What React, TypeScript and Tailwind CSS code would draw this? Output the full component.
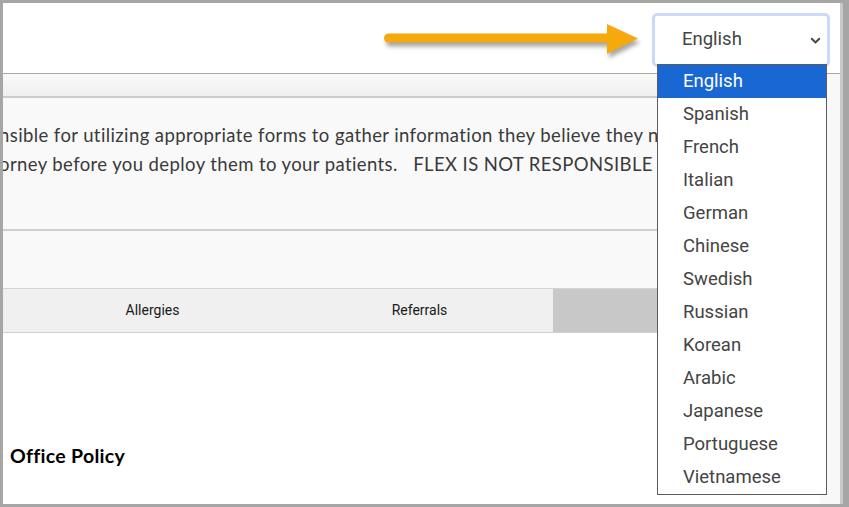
import React from 'react';

const languages = [
  'English',
  'Spanish',
  'French',
  'Italian',
  'German',
  'Chinese',
  'Swedish',
  'Russian',
  'Korean',
  'Arabic',
  'Japanese',
  'Portuguese',
  'Vietnamese',
];

// first and last tab sit off-screen / under the dropdown, so no labels shown
const tabs = ['', 'Allergies', 'Referrals', ''];

function Arrow() {
  return (
    <svg
      className="absolute left-[377px] top-[17px] drop-shadow-[2px_4px_2px_rgba(0,0,0,0.35)]"
      width="262"
      height="40"
      viewBox="0 0 262 40"
    >
      <line x1="8.5" y1="18" x2="232" y2="18" stroke="#f6a90d" strokeWidth="9" strokeLinecap="round" />
      <polygon points="227,4 258,18.5 227,34" fill="#f6a90d" />
    </svg>
  );
}

function LanguageSelect() {
  return (
    <>
      <div className="absolute left-[649px] top-[10px] w-[178px] h-[54px] rounded-[5px] border-[3px] border-[#c9dbf6] bg-white flex items-center pl-[27px] pr-[6px] font-['Roboto',sans-serif] text-[18.5px] text-[#444]">
        <span className="flex-1">English</span>
        <svg width="11" height="7" viewBox="0 0 11 7">
          <path d="M1.2 1.2 L5.5 5.4 L9.8 1.2" fill="none" stroke="#444" strokeWidth="2" />
        </svg>
      </div>
      <ul className="absolute left-[654px] top-[61px] w-[170px] border border-[#5c5c5c] bg-white font-['Roboto',sans-serif] text-[18.5px] text-[#444]">
        {languages.map((lang, idx) => (
          <li
            key={lang}
            className={`h-[33px] flex items-center pl-[25px] ${idx === 0 ? 'bg-[#1967d2] text-white' : ''}`}
          >
            {lang}
          </li>
        ))}
      </ul>
    </>
  );
}

export default function App() {
  return (
    <div className="w-[849px] h-[507px] bg-[#a6a6a6] pt-[3px] pl-[3px] pr-[6px] pb-[3px]">
      <div className="relative h-full flex flex-col bg-white border-r-[3px] border-[#c8c8c8] overflow-hidden">
        <header className="h-[71px] shrink-0 bg-white border-b border-[#a9a9a9] shadow-[0_1px_2px_rgba(0,0,0,0.15)]" />
        <div className="flex flex-1 min-h-0">
          <main className="flex-1 flex flex-col min-w-0 overflow-hidden">
            <div className="h-[24px] shrink-0 bg-gradient-to-b from-[#f9f9f9] to-[#efefef] border-b-2 border-[#cbcbcb]" />
            <div className="h-[133px] shrink-0 bg-[#f9f9f9] border-b-2 border-[#cfcfcf] pt-[23px] font-['Lato',sans-serif] text-[18.5px] leading-[29px] tracking-[0.4px] text-[#3a3a3a] whitespace-pre">
              <div className="-ml-[4px]">nsible for utilizing appropriate forms to gather information they believe they need</div>
              <div className="-ml-[4px]">orney before you deploy them to your patients.   FLEX IS NOT RESPONSIBLE FOR</div>
            </div>
            <div className="h-[58px] shrink-0 bg-[#f9f9f9] border-b border-[#d4d4d4]" />
            <div className="h-[44px] shrink-0 flex bg-[#f0f0f0] border-b border-[#d0d0d0] -ml-[251px] font-['Roboto',sans-serif] text-[14px] text-[#1a1a1a]">
              {tabs.map((tab, idx) => (
                <div
                  key={idx}
                  className={`w-[267px] shrink-0 flex items-center justify-center ${idx === 3 ? 'bg-[#c8c8c8]' : ''}`}
                >
                  {tab}
                </div>
              ))}
            </div>
            <div className="flex-1 pl-[7px] pt-[108px] font-['Lato',sans-serif]">
              <h2 className="text-[19.5px] font-bold tracking-[0.3px] text-black">Office Policy</h2>
            </div>
          </main>
          <div className="w-[20px] shrink-0 bg-[#f8f8f8]" />
        </div>
        <Arrow />
        <LanguageSelect />
      </div>
    </div>
  );
}
